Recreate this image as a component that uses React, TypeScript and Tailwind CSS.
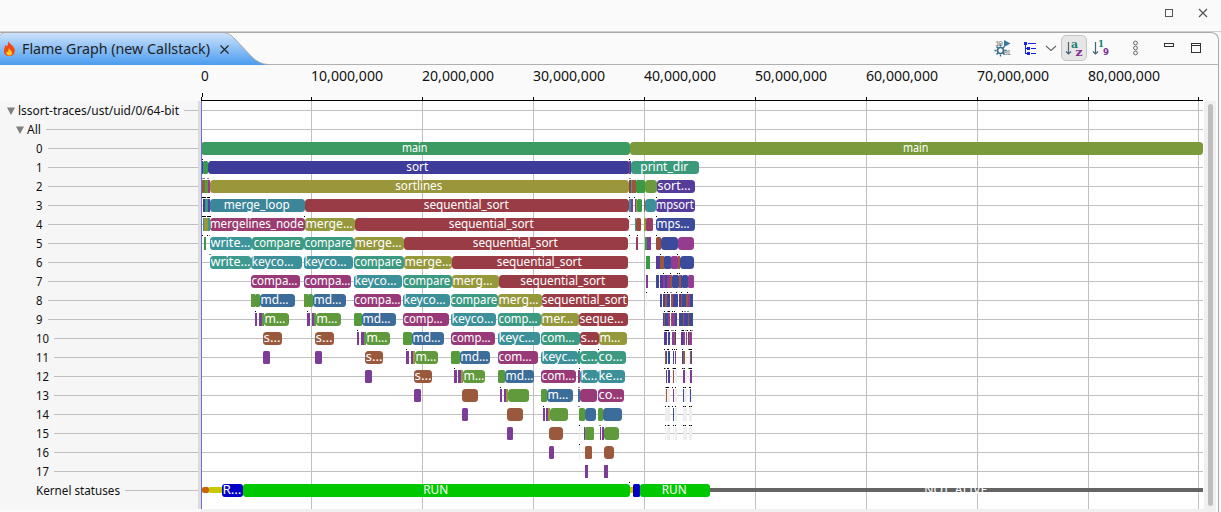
import React from 'react';

const C = {
  red: '#9a3c46', olive: '#9a963c', lime: '#96983c', teal: '#3c9a82', cyan: '#3c909a',
  mag: '#983a78', blue: '#3c6c9a', green: '#609a3c', grn: '#3c9a46', brown: '#9a583c',
  pur: '#7c3c98', ind: '#3e3c9a', vio: '#563c9a', navy: '#3c4a9a', orc: '#963c90',
};

type Bar = [number, number, string, string?];

const rows: Bar[][] = [
  [[201, 630, '#3c9a63', 'main'], [630, 1203, '#7a9a3c', 'main']],
  [[202, 203, '#2a3ce0'], [203, 208, C.grn], [208, 630, C.ind, 'sort'], [629, 630, C.mag], [630, 631, C.ind], [631, 699, '#3c9a7c', 'print_dir']],
  [[202, 203, C.brown], [203, 205, '#7c7040'], [205, 208, C.green], [208, 210, C.orc], [210, 629, C.olive, 'sortlines'], [629, 630, C.red], [630, 631, C.pur], [631, 632, C.green], [632, 636, C.brown], [636, 645, C.grn], [645, 657, '#6c9a3c'], [657, 695, C.vio, 'sort…']],
  [[203, 205, C.ind], [205, 208, C.teal], [208, 210, C.vio], [210, 305, '#3c869a', 'merge_loop'], [305, 629, C.red, 'sequential_sort'], [629, 631, C.cyan], [631, 633, C.pur], [635, 636, C.mag], [636, 637, C.olive], [637, 642, C.grn], [644, 645, C.brown], [645, 656, C.cyan], [656, 695, C.vio, 'mpsort']],
  [[203, 204, C.cyan], [204, 208, C.lime], [208, 210, C.teal], [210, 305, '#9a3c70', 'mergelines_node'], [305, 355, C.lime, 'merge…'], [355, 629, C.red, 'sequential_sort'], [635, 636, C.teal], [636, 641, '#9a4c3c'], [644, 646, C.lime], [646, 653, '#9a3c68'], [656, 695, C.navy, 'mps…']],
  [[204, 206, C.grn], [210, 252, '#3c959a', 'write…'], [252, 304, C.teal, 'compare'], [304, 354, C.teal, 'compare'], [354, 404, C.lime, 'merge…'], [404, 628, C.red, 'sequential_sort'], [636, 638, '#9a3c5a'], [645, 647, C.grn], [647, 651, C.pur], [656, 661, '#9a4c3c'], [661, 678, C.navy], [678, 694, C.orc]],
  [[210, 251, '#3c9a8e', 'write…'], [251, 302, C.cyan, 'keyco…'], [304, 353, C.cyan, 'keyco…'], [354, 404, C.teal, 'compare'], [404, 452, C.lime, 'merge…'], [452, 628, C.red, 'sequential_sort'], [646, 650, C.grn], [656, 660, C.vio], [660, 664, C.brown], [664, 671, C.navy], [671, 678, C.orc], [678, 680, C.brown], [680, 694, C.navy]],
  [[251, 300, C.mag, 'compa…'], [304, 351, C.mag, 'compa…'], [354, 402, C.cyan, 'keyco…'], [403, 452, C.teal, 'compare'], [452, 499, C.lime, 'merg…'], [499, 628, C.red, 'sequential_sort'], [646, 648, C.pur], [656, 659, C.navy], [660, 663, C.vio], [663, 665, C.orc], [665, 667, C.navy], [667, 670, C.orc], [670, 672, C.brown], [672, 679, C.navy], [679, 681, C.brown], [681, 682, C.vio], [682, 688, C.navy], [688, 694, C.orc]],
  [[251, 255, C.green], [255, 260, '#569a3c'], [260, 295, C.blue, 'md…'], [304, 308, C.green], [308, 313, '#569a3c'], [313, 346, C.blue, 'md…'], [354, 401, C.mag, 'compa…'], [403, 450, C.cyan, 'keyco…'], [451, 498, C.teal, 'compare'], [498, 542, C.lime, 'merg…'], [542, 628, C.red, 'sequential_sort'], [660, 662, C.navy], [663, 665, C.vio], [665, 667, C.brown], [667, 670, C.navy], [671, 673, C.brown], [673, 675, C.vio], [675, 678, C.navy], [679, 681, C.vio], [681, 682, C.brown], [682, 686, C.navy], [686, 688, C.brown], [688, 690, C.orc], [690, 693, C.navy]],
  [[255, 257, C.pur], [259, 262, C.pur], [262, 264, C.green], [264, 289, C.green, 'm…'], [307, 310, C.pur], [312, 314, C.pur], [314, 316, C.green], [316, 341, C.green, 'm…'], [354, 362, '#569a3c'], [362, 396, C.blue, 'md…'], [403, 449, C.mag, 'comp…'], [451, 496, C.cyan, 'keyco…'], [498, 541, C.teal, 'comp…'], [541, 579, C.lime, 'mer…'], [579, 628, C.red, 'seque…'], [663, 664, C.vio], [664, 665, C.brown], [665, 668, C.navy], [668, 670, C.orc], [671, 672, C.brown], [672, 675, C.orc], [675, 677, C.navy], [679, 683, C.navy], [683, 684, C.brown], [684, 686, C.vio], [686, 688, C.navy], [688, 689, C.brown], [689, 693, C.navy]],
  [[263, 282, C.brown, 's…'], [315, 334, C.brown, 's…'], [357, 359, C.pur], [361, 364, C.pur], [364, 366, C.green], [366, 390, C.green, 'm…'], [403, 412, '#569a3c'], [412, 444, C.blue, 'md…'], [451, 495, C.mag, 'comp…'], [498, 540, C.cyan, 'keyc…'], [541, 580, C.teal, 'com…'], [580, 599, C.red, 's…'], [599, 627, C.lime, 'm…'], [664, 667, C.vio], [668, 670, C.navy], [672, 674, C.orc], [674, 675, C.brown], [675, 676, C.navy], [681, 683, C.vio], [683, 685, C.orc], [686, 687, C.orc], [688, 689, C.vio], [689, 690, C.brown], [690, 692, C.orc]],
  [[263, 270, C.pur], [315, 322, C.pur], [365, 383, C.brown, 's…'], [406, 409, C.pur], [411, 413, C.pur], [413, 415, C.lime], [415, 438, C.green, 'm…'], [451, 460, '#569a3c'], [460, 490, C.blue, 'md…'], [498, 538, C.mag, 'com…'], [541, 578, C.cyan, 'keyc…'], [578, 580, C.teal], [580, 598, C.teal, 'c…'], [598, 626, C.teal, 'co…'], [665, 666, C.brown], [666, 667, C.navy], [668, 670, C.navy], [673, 674, C.navy], [675, 676, C.pur], [682, 683, C.navy], [683, 685, C.brown], [690, 691, C.brown], [691, 692, C.navy]],
  [[365, 372, C.pur], [414, 432, C.brown, 's…'], [454, 457, C.pur], [458, 461, C.pur], [461, 463, C.lime], [463, 485, C.green, 'm…'], [498, 505, '#569a3c'], [505, 534, C.blue, 'md…'], [541, 576, C.mag, 'com…'], [578, 580, C.mag], [580, 598, C.cyan, 'k…'], [598, 625, C.cyan, 'ke…'], [666, 667, C.navy], [668, 670, C.vio], [673, 674, C.brown], [683, 685, C.pur], [690, 692, C.pur]],
  [[414, 421, C.pur], [462, 478, C.brown], [500, 502, C.pur], [504, 506, C.pur], [506, 508, C.lime], [508, 529, C.green], [541, 547, '#569a3c'], [547, 573, C.blue, 'm…'], [578, 580, C.blue], [580, 597, C.mag], [598, 624, C.mag, 'co…'], [666, 667, C.brown], [673, 674, C.pur], [683, 684, C.navy], [690, 691, C.navy]],
  [[462, 468, C.pur], [507, 523, C.brown], [543, 545, C.pur], [546, 548, C.pur], [548, 550, C.lime], [550, 568, C.green], [579, 585, '#569a3c'], [585, 596, C.blue], [598, 603, '#569a3c'], [603, 622, C.blue], [673, 674, C.navy]],
  [[507, 513, C.pur], [549, 563, C.brown], [584, 585, C.pur], [585, 594, C.green], [600, 601, C.pur], [602, 604, C.pur], [604, 619, C.green]],
  [[549, 554, C.pur], [585, 592, C.brown], [604, 614, C.brown]],
  [[585, 588, C.pur], [604, 608, C.pur]],
];

const widths: Record<string, number> = {
  main: 25.5, sort: 22, print_dir: 48, sortlines: 47, 'sort…': 33, merge_loop: 66, sequential_sort: 85,
  mpsort: 38, mergelines_node: 94, 'merge…': 47, 'mps…': 33, 'write…': 40, compare: 47, 'keyco…': 42,
  'compa…': 46, 'merg…': 40, 'md…': 28, 'm…': 21, 'comp…': 39, 'mer…': 32, 'seque…': 44, 's…': 17,
  'keyc…': 36, 'com…': 33, 'c…': 17, 'co…': 24, 'k…': 17, 'ke…': 24, RUN: 25, 'R…': 19, 'NOT_ALIVE': 63,
};

// Markers for events too short to draw: [row, x, width]
const marks: [number, number, number][] = [
  [1, 202, 1], [3, 202, 4], [3, 207, 3], [4, 202, 4], [4, 207, 4], [4, 304, 1], [5, 202, 1], [5, 207, 1],
  [1, 629, 1], [3, 629, 1], [3, 634, 1], [3, 656, 1], [4, 629, 1], [4, 656, 1], [5, 629, 1], [5, 637, 1], [5, 656, 1], [6, 660, 1], [6, 677, 1],
  [7, 663, 1], [7, 670, 1], [7, 677, 1], [7, 679, 1], [8, 646, 1], [8, 664, 1], [8, 667, 1], [8, 676, 1], [8, 681, 1], [8, 687, 1],
  [9, 255, 1], [9, 307, 1], [9, 664, 1], [9, 668, 2], [9, 672, 1], [9, 674, 1], [9, 682, 1],
  [10, 357, 1], [10, 665, 4], [10, 675, 1], [10, 682, 2], [10, 687, 1], [10, 690, 1],
  [11, 406, 1], [11, 579, 1], [11, 598, 1], [11, 664, 1], [11, 667, 2], [11, 672, 1], [11, 674, 1], [11, 676, 1], [11, 682, 1], [11, 689, 3],
  [12, 454, 1], [12, 579, 1], [12, 664, 1], [12, 667, 2], [12, 673, 3], [12, 682, 1], [12, 684, 1], [12, 689, 3],
  [13, 500, 1], [13, 666, 3], [13, 672, 1], [13, 675, 1], [13, 683, 1], [13, 685, 1], [13, 689, 2],
  [14, 543, 1], [14, 665, 1], [14, 668, 1], [14, 672, 1], [14, 675, 1], [14, 683, 1], [14, 685, 1], [14, 689, 1], [14, 691, 1],
  [15, 579, 1], [15, 665, 1], [15, 668, 1], [15, 673, 1], [15, 675, 1], [15, 683, 1], [15, 685, 1], [15, 689, 1], [15, 691, 1],
  [16, 579, 1], [18, 629, 1],
];

// Lighter markers where several short events are blended
const softMarks: [number, number, number][] = [
  [2, 202, 3], [2, 207, 2], [5, 209, 1], [6, 209, 2], [2, 629, 2], [8, 670, 2], [9, 667, 1], [9, 684, 2], [9, 687, 2],
  [10, 664, 1], [10, 671, 3], [10, 681, 1], [10, 685, 2], [10, 691, 2], [11, 688, 1], [12, 665, 1], [12, 672, 1],
  [12, 683, 1], [12, 688, 1], [13, 578, 2], [13, 665, 1], [13, 684, 1], [14, 578, 2], [14, 669, 1], [14, 684, 1],
  [14, 690, 1], [15, 599, 2], [15, 667, 1], [15, 669, 1], [15, 684, 1], [15, 690, 1],
];

// Faint columns: [first row, last row, x, width]
const faint: [number, number, number, number][] = [
  [13, 14, 665, 5], [12, 12, 672, 1], [12, 14, 675, 2], [11, 12, 686, 1], [12, 14, 683, 4], [11, 14, 689, 3],
  [15, 15, 665, 1], [15, 15, 667, 3], [15, 15, 673, 1], [15, 15, 675, 2], [15, 15, 683, 4], [15, 15, 689, 3],
  [15, 16, 579, 1], [8, 8, 646, 1], [5, 5, 629, 1], [4, 4, 629, 1],
];

const grid = [311, 422, 533, 644, 755, 866, 977, 1088, 1198];

function Label({ a, b, y, t }: { a: number; b: number; y: number; t: string }) {
  const w = widths[t];
  const x = t.endsWith('…') ? a + 0.5 : (a + b - w) / 2 - 0.75;
  return <text x={x} y={y} fill="#fff" fontSize="12" textLength={w} lengthAdjust="spacingAndGlyphs">{t}</text>;
}

function Chart() {
  return (
    <svg className="block shrink-0 bg-white" width="1003" height="408" viewBox="201 101 1003 408" fontFamily="'Noto Sans', 'Open Sans', sans-serif">
      <g shapeRendering="crispEdges">
        {grid.map((x) => <rect key={x} x={x} y="101" width="1" height="408" fill="#c0c0c0" />)}
        {Array.from({ length: 21 }, (_, i) => <rect key={i} x="202" y={110 + i * 19} width="1001" height="1" fill="#c0c0c0" />)}
        {faint.map(([r0, r1, x, w], i) =>
          Array.from({ length: r1 - r0 + 1 }, (_, k) => <rect key={`${i}-${k}`} x={x} y={142 + (r0 + k) * 19} width={w} height="13" fill="#eeeeee" />),
        )}
      </g>
      {rows.map((row, r) => row.map(([a, b, color, t], i) => (
        <g key={`${r}-${i}`}>
          <rect x={a} y={142 + r * 19} width={b - a} height="13" rx={b - a > 9 ? 3.5 : b - a > 4 ? 1.5 : 0} fill={color} />
          {t && <Label a={r === 1 && t === 'sort' ? 206 : a} b={b} y={152 + r * 19} t={t} />}
        </g>
      )))}
      <g shapeRendering="crispEdges">
        <rect x="201" y="101" width="1" height="408" fill="#6c6cd4" />
        {softMarks.map(([r, x, w], i) => <rect key={i} x={x} y={140 + r * 19} width={w} height="1" fill="#888" />)}
        {marks.map(([r, x, w], i) => <rect key={i} x={x} y={140 + r * 19} width={w} height="1" fill="#000" />)}
      </g>
      <rect x="202" y="487" width="7" height="6" rx="2" fill="#c86400" />
      <rect x="209" y="487" width="13" height="6" rx="1" fill="#c8c800" />
      <rect x="222" y="484" width="21" height="13" rx="3" fill="#0000c8" />
      <Label a={222} b={243} y={494} t="R…" />
      <rect x="243" y="484" width="387" height="13" rx="3" fill="#00c800" />
      <Label a={243} b={630} y={494} t="RUN" />
      <rect x="630" y="487" width="3" height="6" fill="#c8c800" />
      <rect x="633" y="484" width="7" height="13" rx="1.5" fill="#0000c8" />
      <rect x="640" y="484" width="70" height="13" rx="3" fill="#00c800" />
      <Label a={640} b={710} y={494} t="RUN" />
      <rect x="710" y="488" width="493" height="4" fill="#646464" />
      <Label a={710} b={1203} y={494} t="NOT_ALIVE" />
    </svg>
  );
}

function TreeRow({ label, indent, arrow, width }: { label: string; indent: number; arrow?: boolean; width: number }) {
  return (
    <div className="flex h-[19px] items-center" style={{ paddingLeft: indent }}>
      {arrow && <svg className="mr-[3.5px] shrink-0" width="8" height="8"><path d="M0 0.5h8L4 8z" fill="#808080" /></svg>}
      <svg className="block shrink-0 overflow-visible" width={width} height="19" fontFamily="'Noto Sans', 'Open Sans', sans-serif">
        <text x="0" y="14" fontSize="12" fill="#111" textLength={width} lengthAdjust="spacingAndGlyphs">{label}</text>
      </svg>
      <div className="ml-[5px] h-px flex-1 bg-[#c0c0c0]" />
    </div>
  );
}

const axis = ['10,000,000', '20,000,000', '30,000,000', '40,000,000', '50,000,000', '60,000,000', '70,000,000', '80,000,000'];

function Axis() {
  return (
    <svg className="ml-[201px] block" width="1003" height="36" viewBox="201 65 1003 36" fontFamily="'Noto Sans', 'Open Sans', sans-serif">
      <text x="201" y="81" fontSize="13.5" fill="#111">0</text>
      {axis.map((t, i) => <text key={t} x={311 + i * 111} y="81" fontSize="13.5" fill="#111" textLength="72" lengthAdjust="spacingAndGlyphs">{t}</text>)}
      <g shapeRendering="crispEdges">
        <rect x="201" y="100" width="1002" height="1" />
        <rect x="202" y="93" width="1" height="4" />
        <rect x="201" y="97" width="1" height="4" />
        {grid.map((x) => <rect key={x} x={x} y="97" width="1" height="4" />)}
      </g>
    </svg>
  );
}

function Toolbar() {
  return (
    <svg className="block shrink-0" width="231" height="30" viewBox="984 33 231 30">
      <g transform="translate(1 0)">
        <g fontFamily="'Liberation Mono', monospace" fontSize="8" fill="#777">
          <text x="994" y="46" textLength="8">10</text><text x="1002" y="55" textLength="8">01</text>
        </g>
        <g stroke="#33698a" fill="none">
          <circle cx="999.5" cy="50.5" r="3" strokeWidth="1.6" />
          <path d="M999.5 44.5v2M999.5 54.500v2M993.5 50.5h2M1003.500 50.5h2M995.5 46.5l1.500 1.500M1002 53l1.500 1.500M1003.500 46.5l-1.500 1.500M997 53l-1.500 1.500" strokeWidth="1.4" />
        </g>
        <path d="M1003 40l6.500 3.500-6.500 3.500z" fill="#3b789a" />
      </g>
      <g fill="#1524e0" shapeRendering="crispEdges">
        <rect x="1024" y="42" width="3" height="3" /><rect x="1025" y="44" width="1" height="10" />
        <rect x="1028" y="43" width="8" height="1" /><rect x="1025" y="48" width="3" height="1" />
        <rect x="1027" y="47" width="3" height="3" /><rect x="1031" y="48" width="5" height="1" />
        <rect x="1025" y="53" width="3" height="1" /><rect x="1027" y="52" width="3" height="3" /><rect x="1031" y="53" width="5" height="1" />
      </g>
      <path d="M1046 46l5 4.500 5-4.500" fill="none" stroke="#666" strokeWidth="1.1" />
      <rect x="1061.500" y="35.500" width="25" height="25" rx="4.500" fill="#e6e6e6" stroke="#c4c4c4" />
      <path d="M1068.500 42v12M1066 51.500l2.500 2.500 2.500-2.500M1095.500 42v12M1093 51.500l2.500 2.500 2.500-2.500" fill="none" stroke="#47617a" strokeWidth="1.2" />
      <g fontFamily="'DejaVu Serif', serif" fontWeight="bold">
        <text x="1071" y="47.500" fontSize="11" textLength="7" lengthAdjust="spacingAndGlyphs" fill="#16806e">a</text>
        <text x="1075.500" y="55.500" fontSize="11" textLength="7" lengthAdjust="spacingAndGlyphs" fill="#803090">z</text>
        <text x="1098" y="47" fontSize="9" textLength="6" lengthAdjust="spacingAndGlyphs" fill="#16806e">1</text>
        <text x="1103" y="55" fontSize="9" fontFamily="'DejaVu Sans', sans-serif" textLength="6" lengthAdjust="spacingAndGlyphs" fill="#803090">9</text>
      </g>
      <g fill="none" stroke="#666" strokeWidth="1"><circle cx="1135.500" cy="43" r="1.900" /><circle cx="1135.500" cy="48" r="1.900" /><circle cx="1135.500" cy="53" r="1.900" /></g>
      <g fill="none" stroke="#333" shapeRendering="crispEdges">
        <rect x="1164.500" y="43.500" width="9" height="3" />
        <rect x="1191.500" y="43.500" width="9" height="9" /><path d="M1191 45.500h10" />
      </g>
    </svg>
  );
}

function Tab() {
  return (
    <div className="h-[33px] w-[268px] shrink-0">
      <svg className="block" width="268" height="33" viewBox="0 32 268 33">
        <defs><linearGradient id="tab" x2="0" y2="1"><stop stopColor="#cde2fb" /><stop offset="1" stopColor="#4a9cf0" /></linearGradient></defs>
        <path d="M0 65V35.500Q1 33 5 33H222C228 33 231 35 235 39L252 57Q259 64 268 64.500V65z" fill="url(#tab)" />
        <path d="M0 35.500Q1 32.500 5 32.500H222C228 32.500 231 35 235 39L252 57Q259 64 268 64.500" fill="none" stroke="#aaa" />
        <path d="M8 41C9 44 14 45 14.800 50C15 54 12.500 56 9.500 56C6 56 4 54 4 51C4 48 5 47 5.500 45L7 46.500C8 45 8 43 8 41z" fill="#f04a12" />
        <path d="M9 48C9.500 50 12.500 51 12 53.500C11.500 55 10.500 55.500 9.500 55.500C7 55.500 6 54 6.500 51.500L8 52z" fill="#ffc928" />
        <text x="22" y="54" fontSize="14" fill="#222" fontFamily="'Noto Sans', 'Open Sans', sans-serif" textLength="188" lengthAdjust="spacingAndGlyphs">Flame Graph (new Callstack)</text>
        <path d="M220.500 45.500l8 8m0-8l-8 8" stroke="#222" strokeWidth="1.100" />
      </svg>
    </div>
  );
}

export default function App() {
  return (
    <div className="flex h-[512px] w-[1221px] flex-col overflow-hidden bg-[#fafafa]">
      <div className="flex h-8 shrink-0 items-start justify-end border-b border-[#d0d0d0] pt-2 pr-3">
        <svg width="46" height="12" fill="none" stroke="#555"><path d="M2.500 1.500h7v7h-7z" shapeRendering="crispEdges" /><path d="M36 1l8 8m0-8l-8 8" strokeWidth="1.300" /></svg>
      </div>
      <div className="flex h-[480px] w-[1219px] flex-col overflow-hidden rounded-tr-lg border-t border-r border-[#aaa]">
        <div className="-mt-px flex h-[33px] shrink-0 items-center justify-between border-b border-[#b0b0b0] pr-[3px]">
          <Tab />
          <Toolbar />
        </div>
        <Axis />
        <div className="flex h-[408px] shrink-0">
          <div className="flex w-[198px] shrink-0 flex-col bg-[#f6f6f6]">
            <TreeRow label="lssort-traces/ust/uid/0/64-bit" indent={6.5} arrow width={161} />
            <TreeRow label="All" indent={15.5} arrow width={14} />
            {Array.from({ length: 18 }, (_, i) => <TreeRow key={i} label={String(i)} indent={36} width={i > 9 ? 13 : 6.5} />)}
            <TreeRow label="Kernel statuses" indent={36} width={84} />
          </div>
          <div className="w-[3px] shrink-0 bg-[#dcdcdc]" />
          <Chart />
          <div className="flex w-3 shrink-0 justify-center bg-[#f0f0f0] pt-[3px]"><div className="h-[402px] w-[5px] rounded-full bg-[#bebebe]" /></div>
        </div>
        <div className="ml-[201px] h-[3px] w-[1015px] bg-[#f0f0f0]" />
      </div>
    </div>
  );
}
